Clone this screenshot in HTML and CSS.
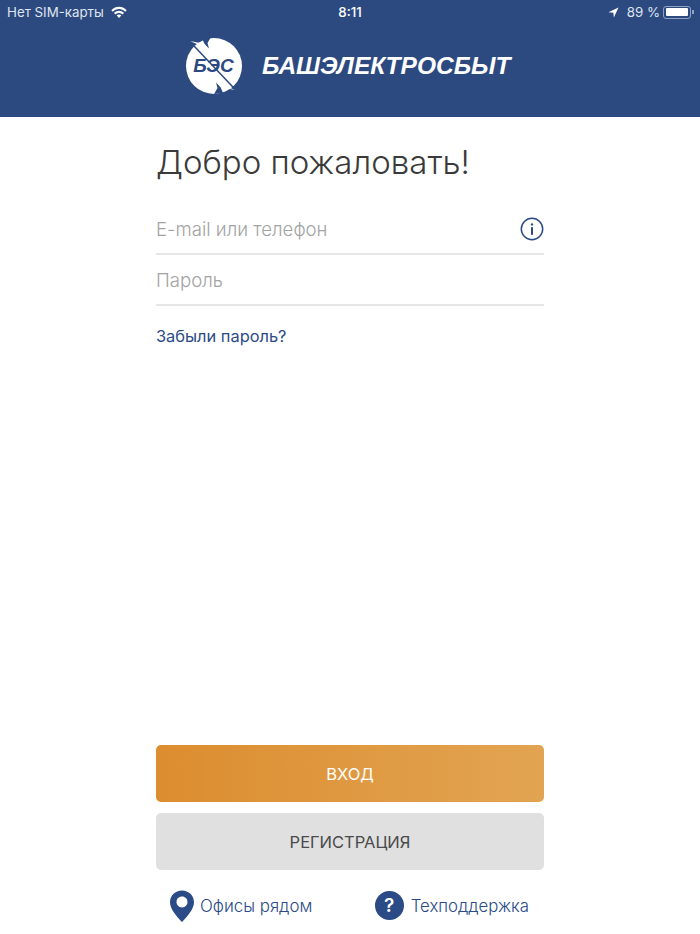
FILE: index.html
```html
<!DOCTYPE html>
<html lang="ru">
<head>
    <meta charset="UTF-8">
    <meta name="viewport" content="width=device-width, initial-scale=1.0">
    <title>Башэлектросбыт</title>
    <link rel="stylesheet" href="styles.css">
</head>
<body>
    <header class="app-header">
        <div class="status-bar">
            <div class="status-left">
                <span>Нет SIM-карты</span>
                <svg class="wifi-icon" viewBox="0 0 16 12" width="16" height="12">
                    <path d="M0.3 4.2C4.6 -0.3 11.4 -0.3 15.7 4.2L14.2 5.8C10.7 2.2 5.3 2.2 1.8 5.8Z" fill="#fff"/>
                    <path d="M3 6.9C5.8 4 10.2 4 13 6.9L11.5 8.4C9.5 6.4 6.5 6.4 4.5 8.4Z" fill="#fff"/>
                    <path d="M5.7 9.5C7 8.2 9 8.2 10.3 9.5L8 11.9Z" fill="#fff"/>
                </svg>
            </div>
            <div class="status-time">8:11</div>
            <div class="status-right">
                <svg viewBox="0 0 12 12" width="11" height="11">
                    <path d="M11.5 0.5L0.5 5.6L5.8 6.2L6.4 11.5Z" fill="#fff"/>
                </svg>
                <span class="battery-text">89 %</span>
                <div class="battery">
                    <div class="battery-level"></div>
                </div>
                <div class="battery-cap"></div>
            </div>
        </div>
        <div class="brand">
            <svg class="brand-logo" viewBox="0 0 60 60" width="60" height="60">
                <circle cx="30" cy="30" r="28" fill="#fff"/>
                <!-- muesca y punta del rayo -->
                <g id="bolt">
                    <path d="M18 2L27 1L23.5 7L25 12.5L20.5 8Z" fill="#2d4a80"/>
                    <path d="M6 5L21 8L22 12Z" fill="#fff"/>
                </g>
                <use href="#bolt" transform="rotate(180 28.5 29.5)"/>
                <text class="brand-logo-text" x="29.5" y="36" text-anchor="middle">БЭС</text>
                <path d="M6 5.7L51 53.3" stroke="#2d4a80" stroke-width="1.5" fill="none"/>
            </svg>
            <span class="brand-name">БАШЭЛЕКТРОСБЫТ</span>
        </div>
    </header>

    <main class="login-container">
        <h1>Добро пожаловать!</h1>
        <div class="field">
            <span class="field-label">E-mail или телефон</span>
            <svg class="info-icon" viewBox="0 0 24 24" width="24" height="24">
                <circle cx="12" cy="12" r="10.7" fill="none" stroke="#2b4b86" stroke-width="1.5"/>
                <circle cx="12" cy="7.4" r="1.2" fill="#2b4b86"/>
                <rect x="11" y="10.2" width="2" height="7.6" fill="#2b4b86"/>
            </svg>
        </div>
        <div class="field">
            <span class="field-label">Пароль</span>
        </div>
        <a class="forgot-link" href="#">Забыли пароль?</a>

        <div class="actions">
            <button class="btn btn-login">ВХОД</button>
            <button class="btn btn-register">РЕГИСТРАЦИЯ</button>
        </div>

        <div class="bottom-links">
            <a class="bottom-link" href="#">
                <svg viewBox="0 0 26 32" width="26" height="32">
                    <path fill-rule="evenodd" d="M13 0.5C19.6 0.5 25 5.6 25 12.2C25 19.4 18 26.6 13 32C8 26.6 1 19.4 1 12.2C1 5.6 6.4 0.5 13 0.5ZM13 6.6C9.9 6.6 7.5 9 7.5 12C7.5 15 9.9 17.4 13 17.4C16.1 17.4 18.5 15 18.5 12C18.5 9 16.1 6.6 13 6.6Z" fill="#2b4b86"/>
                </svg>
                <span>Офисы рядом</span>
            </a>
            <a class="bottom-link bottom-link-help" href="#">
                <span class="help-icon">?</span>
                <span>Техподдержка</span>
            </a>
        </div>
    </main>
</body>
</html>
```

FILE: styles.css
```css
/* CSS */
* {
    box-sizing: border-box;
}

body {
    margin: 0;
    height: 934px;
    display: flex;
    flex-direction: column;
    background-color: #ffffff;
    font-family: Inter, "Noto Sans", sans-serif;
    overflow: hidden;
}

/* Cabecera */
.app-header {
    height: 117px;
    background-color: #2d4a80;
    color: #ffffff;
}

.status-bar {
    height: 24px;
    padding: 0 7px;
    display: grid;
    grid-template-columns: 1fr auto 1fr;
    align-items: center;
    font-size: 13.3px;
    color: #dfe5ef;
}

.status-left {
    display: flex;
    align-items: center;
    gap: 7px;
}

.status-time {
    color: #ffffff;
    font-weight: 500;
}

.status-right {
    display: flex;
    align-items: center;
    justify-content: flex-end;
    margin-right: -1px;
}

.battery-text {
    margin: 0 3px 0 8px;
}

.battery {
    width: 28px;
    height: 13px;
    padding: 1.5px;
    border: 1px solid #8fa1c0;
    border-radius: 3px;
}

.battery-level {
    width: 22px;
    height: 100%;
    background-color: #ffffff;
    border-radius: 1px;
}

.battery-cap {
    width: 2px;
    height: 4px;
    margin-left: 1px;
    background-color: #8fa1c0;
}

.brand {
    height: 84px;
    padding-left: 184px;
    display: flex;
    align-items: center;
    gap: 18px;
}

.brand-logo {
    flex-shrink: 0;
}

.brand-logo-text {
    font-family: "Liberation Sans", sans-serif;
    font-size: 19px;
    font-weight: bold;
    font-style: italic;
    fill: #2d4a80;
}

.brand-name {
    font-family: "Liberation Sans", sans-serif;
    font-size: 24.5px;
    font-weight: bold;
    font-style: italic;
    color: #ffffff;
}

/* Formulario */
.login-container {
    flex: 1;
    width: 388px;
    margin: 0 auto;
    display: flex;
    flex-direction: column;
}

h1 {
    margin: 23px 0 20px;
    font-size: 33px;
    line-height: 44px;
    font-weight: 300;
    color: #3a3a3a;
}

.field {
    height: 51px;
    padding-top: 1px;
    display: flex;
    align-items: center;
    justify-content: space-between;
    border-bottom: 2px solid #e6e6e6;
}

.field-label {
    font-size: 18.6px;
    font-weight: 300;
    color: #a3a3a3;
}

.forgot-link {
    margin-top: 20px;
    font-size: 16.4px;
    line-height: 20px;
    color: #2b4b86;
    text-decoration: none;
}

.actions {
    margin-top: auto;
    display: flex;
    flex-direction: column;
    gap: 11px;
}

.btn {
    height: 57px;
    border: none;
    border-radius: 5px;
    font-family: inherit;
    font-size: 16.5px;
}

.btn-login {
    background: linear-gradient(90deg, #dc8d2f 0%, #e2a452 100%);
    color: #ffffff;
}

.btn-register {
    background-color: #e0e0e0;
    color: #4a4a4a;
}

.bottom-links {
    height: 64px;
    padding: 7px 15px 0 13px;
    display: flex;
    align-items: center;
    justify-content: space-between;
}

.bottom-link {
    display: flex;
    align-items: center;
    gap: 5px;
    font-size: 16.9px;
    font-weight: 300;
    color: #2b4b86;
    text-decoration: none;
}

.bottom-link-help {
    gap: 7px;
    font-size: 16.8px;
}

.help-icon {
    width: 29px;
    height: 29px;
    border-radius: 50%;
    display: flex;
    align-items: center;
    justify-content: center;
    background-color: #2b4b86;
    color: #ffffff;
    font-size: 19px;
    font-weight: 600;
}
```
